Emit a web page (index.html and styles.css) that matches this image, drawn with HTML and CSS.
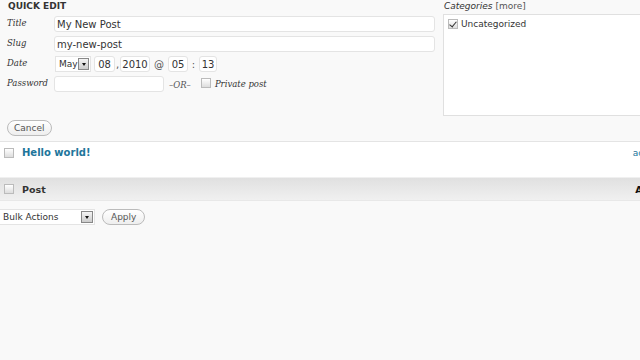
FILE: index.html
```html
<!DOCTYPE html>
<html lang="en">
<head>
    <meta charset="UTF-8">
    <title>Posts - Quick Edit</title>
    <link rel="stylesheet" href="styles.css">
</head>
<body>
    <div class="quick-edit">
        <div class="qe-left">
            <h4 class="qe-title">Quick Edit</h4>
            <div class="qe-row">
                <span class="qe-label">Title</span>
                <input type="text" class="qe-input wide" value="My New Post">
            </div>
            <div class="qe-row">
                <span class="qe-label">Slug</span>
                <input type="text" class="qe-input wide" value="my-new-post">
            </div>
            <div class="qe-row">
                <span class="qe-label">Date</span>
                <div class="date-fields">
                    <span class="select month">May<span class="arrow"></span></span>
                    <input type="text" class="qe-input day" value="08">
                    <span class="sep">,</span>
                    <input type="text" class="qe-input year" value="2010">
                    <span class="sep at">@</span>
                    <input type="text" class="qe-input hour" value="05">
                    <span class="sep colon">:</span>
                    <input type="text" class="qe-input min" value="13">
                </div>
            </div>
            <div class="qe-row">
                <span class="qe-label">Password</span>
                <input type="text" class="qe-input pass" value="">
                <span class="or">&ndash;OR&ndash;</span>
                <span class="check"></span>
                <span class="private">Private post</span>
            </div>
            <div class="qe-buttons">
                <button type="button" class="btn">Cancel</button>
            </div>
        </div>
        <div class="qe-right">
            <div class="cat-title"><em>Categories</em> <span class="more">[more]</span></div>
            <div class="cat-box">
                <div class="cat-item"><span class="check checked"></span>Uncategorized</div>
            </div>
        </div>
    </div>

    <div class="post-row">
        <span class="check"></span>
        <a class="post-title">Hello world!</a>
        <span class="author">admin</span>
    </div>

    <div class="list-head">
        <span class="check"></span>
        <span class="head-post">Post</span>
        <span class="head-author">Author</span>
    </div>

    <div class="bulk">
        <span class="select bulk-select">Bulk Actions<span class="arrow"></span></span>
        <button type="button" class="btn btn-apply">Apply</button>
    </div>
</body>
</html>
```

FILE: styles.css
```css
body {
    margin: 0;
    background-color: #f9f9f9;
    font-family: "DejaVu Sans", Verdana, sans-serif;
    font-size: 10px;
    color: #333;
    overflow: hidden;
}

.quick-edit {
    display: flex;
    height: 141px;
    border-bottom: 1px solid #e4e4e4;
}

.qe-left {
    width: 428px;
    padding-left: 7px;
}

.qe-title {
    margin: 0 0 2px 1px;
    height: 14px;
    line-height: 12px;
    font-size: 9px;
    font-weight: bold;
    text-transform: uppercase;
    color: #333;
}

.qe-row {
    display: flex;
    align-items: center;
    height: 16px;
    margin-bottom: 4px;
}

.qe-label {
    width: 47px;
    flex-shrink: 0;
    font-family: "DejaVu Serif", Georgia, serif;
    font-style: italic;
    font-size: 8.5px;
    color: #333;
    margin-top: -2px;
}

.qe-input {
    box-sizing: border-box;
    height: 16px;
    border: 1px solid #e4e4e4;
    border-radius: 3px;
    background-color: #fff;
    font-family: "DejaVu Sans", Verdana, sans-serif;
    font-size: 10px;
    color: #333;
    padding: 0 2px;
    margin: 0;
    outline: none;
}

.qe-input.wide {
    flex: 1;
}

.date-fields {
    display: flex;
    align-items: center;
}

.select {
    box-sizing: border-box;
    display: flex;
    align-items: center;
    justify-content: space-between;
    height: 16px;
    border: 1px solid #e4e4e4;
    background-color: #fff;
    padding-left: 3px;
    font-size: 9px;
    color: #333;
}

.select .arrow {
    box-sizing: border-box;
    width: 12px;
    height: 12px;
    margin-right: 1px;
    border: 1px solid #888;
    background: linear-gradient(#f4f4f4, #ccc);
    position: relative;
}

.select .arrow::after {
    content: "";
    position: absolute;
    left: 3px;
    top: 4px;
    border-left: 2px solid transparent;
    border-right: 2px solid transparent;
    border-top: 3px solid #111;
}

.month {
    width: 36px;
    margin-left: 1px;
}

.day, .year, .hour, .min {
    padding: 0;
    text-align: center;
}

.day {
    width: 21px;
    margin-left: 3px;
}

.year {
    width: 30px;
}

.hour {
    width: 20px;
}

.min {
    width: 18px;
}

.sep {
    width: 5px;
    text-align: center;
    color: #555;
}

.sep.at {
    width: 18px;
}

.sep.colon {
    width: 11px;
}

.pass {
    width: 110px;
}

.or {
    margin-left: 5px;
    margin-top: 2px;
    font-family: "DejaVu Serif", Georgia, serif;
    font-style: italic;
    font-size: 8.5px;
    color: #555;
}

.check {
    box-sizing: border-box;
    display: inline-block;
    width: 10px;
    height: 10px;
    border: 1px solid #bbb;
    background: linear-gradient(#fff, #ddd);
    flex-shrink: 0;
    position: relative;
}

.check.checked::after {
    content: "";
    position: absolute;
    left: 2px;
    top: 0;
    width: 3px;
    height: 6px;
    border-right: 1.5px solid #333;
    border-bottom: 1.5px solid #333;
    transform: rotate(40deg);
}

.qe-row .check {
    margin-left: 10px;
    margin-top: -2px;
}

.private {
    margin-left: 4px;
    margin-top: -1px;
    font-family: "DejaVu Serif", Georgia, serif;
    font-style: italic;
    font-size: 8.5px;
    color: #333;
}

.qe-buttons {
    margin-top: 28px;
}

.btn {
    box-sizing: border-box;
    height: 16px;
    padding: 0 6px;
    border: 1px solid #bbb;
    border-radius: 8px;
    background: linear-gradient(#fff, #eee);
    font-family: "DejaVu Sans", Verdana, sans-serif;
    font-size: 9px;
    color: #555;
    cursor: pointer;
}

.btn-apply {
    padding: 0 8px;
}

.qe-right {
    flex: 1;
    padding-left: 8px;
}

.cat-title {
    height: 14px;
    line-height: 12px;
    font-size: 9px;
    color: #333;
    padding-left: 1px;
}

.cat-title em {
    font-family: "DejaVu Sans", Verdana, sans-serif;
}

.cat-title .more {
    color: #555;
}

.cat-box {
    box-sizing: border-box;
    height: 102px;
    border: 1px solid #e0e0e0;
    border-right: none;
    background-color: #fff;
    padding: 4px 4px;
}

.cat-item {
    display: flex;
    align-items: center;
    gap: 3px;
    font-size: 9px;
    color: #333;
}

.post-row {
    display: flex;
    height: 36px;
    padding-left: 4px;
    background-color: #fff;
    border-bottom: 1px solid #f0f0f0;
    align-items: flex-start;
    padding-top: 6px;
    box-sizing: border-box;
}

.post-title {
    margin-left: 8px;
    font-weight: bold;
    font-size: 10px;
    color: #21759b;
    line-height: 10px;
    flex: 1;
}

.author {
    font-size: 9px;
    line-height: 10px;
    color: #21759b;
    margin-right: -21px;
}

.list-head {
    display: flex;
    align-items: center;
    height: 22px;
    padding-left: 4px;
    background: linear-gradient(#e0e0e0, #f0f0f0);
    border-bottom: 1px solid #e8e8e8;
}

.head-post {
    margin-left: 8px;
    font-weight: bold;
    font-size: 9.5px;
    color: #333;
    flex: 1;
}

.head-author {
    font-weight: bold;
    font-size: 9.5px;
    color: #111;
    margin-right: -32px;
}

.bulk {
    display: flex;
    align-items: center;
    gap: 7px;
    margin-top: 8px;
}

.bulk-select {
    width: 95px;
    border-left: none;
}
```
